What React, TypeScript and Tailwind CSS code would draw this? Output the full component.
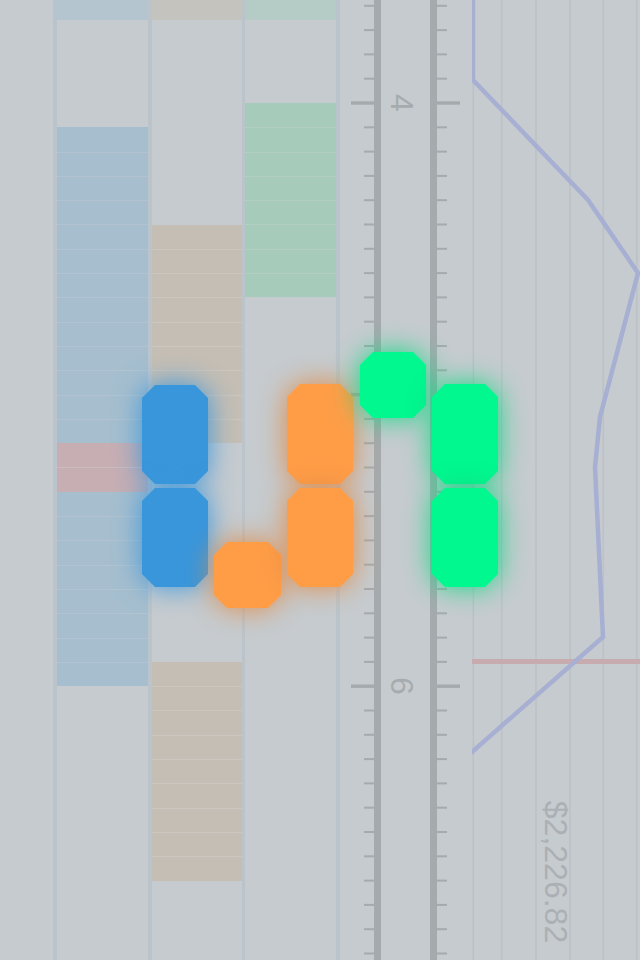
import React from "react";

const S = 24.3;
const G = 103;

type Kind = "blue" | "red" | "tan" | "green";

const rowCls: Record<Kind, { first: string; rest: string }> = {
  blue: { first: "h-[24.3px] bg-[#a6bece]", rest: "h-[24.3px] bg-[#a6bece] border-t border-[#b2c4d1]" },
  red: { first: "h-[24.3px] bg-[#c7aeb3]", rest: "h-[24.3px] bg-[#c7aeb3] border-t border-[#cbbbbf]" },
  tan: { first: "h-[24.3px] bg-[#c5beb4]", rest: "h-[24.3px] bg-[#c5beb4] border-t border-[#cbc6bf]" },
  green: { first: "h-[24.3px] bg-[#a6cbbb]", rest: "h-[24.3px] bg-[#a6cbbb] border-t border-[#b3cfc3]" },
};

function Block({ kind, rows }: { kind: Kind; rows: number }) {
  return (
    <div className="flex flex-col shrink-0">
      {Array.from({ length: rows }).map((_, i) => (
        <div key={i} className={i === 0 ? rowCls[kind].first : rowCls[kind].rest} />
      ))}
    </div>
  );
}

const OCT =
  "[clip-path:polygon(13px_0,calc(100%_-_13px)_0,100%_13px,100%_calc(100%_-_13px),calc(100%_-_13px)_100%,13px_100%,0_calc(100%_-_13px),0_13px)]";

function Ruler() {
  const ticks: { y: number; major: boolean }[] = [];
  for (let k = -5; k <= 36; k++) {
    ticks.push({ y: G + k * S, major: k % 12 === 0 });
  }
  return (
    <div className="relative w-[132px] shrink-0 h-full">
      <svg width="132" height="960" className="block">
        <rect x="34" y="0" width="7" height="960" fill="#a5aaad" />
        <rect x="90" y="0" width="7" height="960" fill="#a5aaad" />
        {ticks.map((t, i) =>
          t.major ? (
            <g key={i}>
              <rect x="11" y={t.y - 1.7} width="23" height="3.4" fill="#a5aaad" />
              <rect x="97" y={t.y - 1.7} width="23" height="3.4" fill="#a5aaad" />
            </g>
          ) : (
            <g key={i}>
              <rect x="24" y={t.y - 1} width="10" height="2" fill="#a5aaad" />
              <rect x="97" y={t.y - 1} width="10" height="2" fill="#a5aaad" />
            </g>
          )
        )}
      </svg>
      <div className="absolute left-[61.5px] top-[103px] -translate-x-1/2 -translate-y-1/2 rotate-90 text-[32px] leading-none text-[#a6abae]">4</div>
      <div className="absolute left-[61.5px] top-[394.6px] -translate-x-1/2 -translate-y-1/2 rotate-90 text-[32px] leading-none text-[#a6abae]">5</div>
      <div className="absolute left-[61.5px] top-[686px] -translate-x-1/2 -translate-y-1/2 rotate-90 text-[32px] leading-none text-[#a6abae]">6</div>
    </div>
  );
}

function Chart() {
  const grid = [1.3, 29.7, 64, 98, 131.3, 164.7];
  const pts = "1,-5 1,80 116,200 166,273 128,417 123,467 131,637 -3,754.6";
  return (
    <div className="relative w-[168px] shrink-0 h-full overflow-hidden">
      <svg width="168" height="960" className="block">
        {grid.map((x, i) => (
          <rect key={i} x={x - 0.75} y="0" width="1.5" height="960" fill="#bbc1c5" />
        ))}
        <rect x="-1" y="659" width="170" height="5" fill="#c8abaf" />
        <polyline points={pts} fill="none" stroke="#a7afd2" strokeWidth="4.5" strokeLinejoin="miter" />
      </svg>
      <div className="absolute left-[83.5px] top-[872px] -translate-x-1/2 -translate-y-1/2 rotate-90 whitespace-nowrap text-[32px] leading-none text-[#abb0b4]">
        $2,226.82
      </div>
    </div>
  );
}

type PieceProps = { pos: string; size: string; bg: string; glow: string };
function Piece({ pos, size, bg, glow }: PieceProps) {
  return (
    <div className={`absolute ${pos} ${glow}`}>
      <div className={`${size} ${bg} ${OCT}`} />
    </div>
  );
}

const BLUE_BG = "bg-[#3996db]";
const BLUE_GLOW = "[filter:drop-shadow(0_0_14px_#3996db)]";
const OR_BG = "bg-[#ff9d47]";
const OR_GLOW = "[filter:drop-shadow(0_0_14px_#e08a45)]";
const GR_BG = "bg-[#00f88f]";
const GR_GLOW = "[filter:drop-shadow(0_0_14px_#10d884)]";

export default function App() {
  return (
    <div className="relative w-[640px] h-[960px] overflow-hidden bg-[#c6cbcf] flex font-['Liberation_Sans',Arial,sans-serif]">
      <div className="w-[53px] shrink-0" />
      <div className="w-[4px] shrink-0 flex flex-col">
        <div className="h-[19.5px] bg-[#b5c5cf]" />
        <div className="flex-1 bg-[#bbc4cb]" />
      </div>
      <div className="w-[91px] shrink-0 flex flex-col">
        <div className="h-[19.5px] shrink-0 bg-[#b5c5cf]" />
        <div className="h-[107.8px] shrink-0" />
        <Block kind="blue" rows={13} />
        <Block kind="red" rows={2} />
        <Block kind="blue" rows={8} />
        <div className="flex-1" />
      </div>
      <div className="w-[4px] shrink-0 bg-[#bbc4cb]" />
      <div className="w-[90px] shrink-0 flex flex-col">
        <div className="h-[19.5px] shrink-0 bg-[#c4c3be]" />
        <div className="h-[205px] shrink-0" />
        <Block kind="tan" rows={9} />
        <div className="h-[218.7px] shrink-0" />
        <Block kind="tan" rows={9} />
        <div className="flex-1" />
      </div>
      <div className="w-[3px] shrink-0 bg-[#bbc4cb]" />
      <div className="w-[91px] shrink-0 flex flex-col">
        <div className="h-[19.5px] shrink-0 bg-[#b5cbc6]" />
        <div className="h-[83.5px] shrink-0" />
        <Block kind="green" rows={8} />
        <div className="flex-1" />
      </div>
      <div className="w-[4px] shrink-0 bg-[#bbc4cb]" />
      <Ruler />
      <Chart />

      <div className="absolute inset-0 pointer-events-none">
        <Piece pos="left-[142px] top-[385px]" size="w-[66px] h-[99px]" bg={BLUE_BG} glow={BLUE_GLOW} />
        <Piece pos="left-[142px] top-[488px]" size="w-[66px] h-[99px]" bg={BLUE_BG} glow={BLUE_GLOW} />
        <Piece pos="left-[214px] top-[542px]" size="w-[67px] h-[66px]" bg={OR_BG} glow={OR_GLOW} />
        <Piece pos="left-[287px] top-[384px]" size="w-[66px] h-[100px]" bg={OR_BG} glow={OR_GLOW} />
        <Piece pos="left-[287px] top-[488px]" size="w-[66px] h-[99px]" bg={OR_BG} glow={OR_GLOW} />
        <Piece pos="left-[360px] top-[352px]" size="w-[66px] h-[66px]" bg={GR_BG} glow={GR_GLOW} />
        <Piece pos="left-[432px] top-[384px]" size="w-[66px] h-[100px]" bg={GR_BG} glow={GR_GLOW} />
        <Piece pos="left-[432px] top-[488px]" size="w-[66px] h-[99px]" bg={GR_BG} glow={GR_GLOW} />
      </div>
    </div>
  );
}
